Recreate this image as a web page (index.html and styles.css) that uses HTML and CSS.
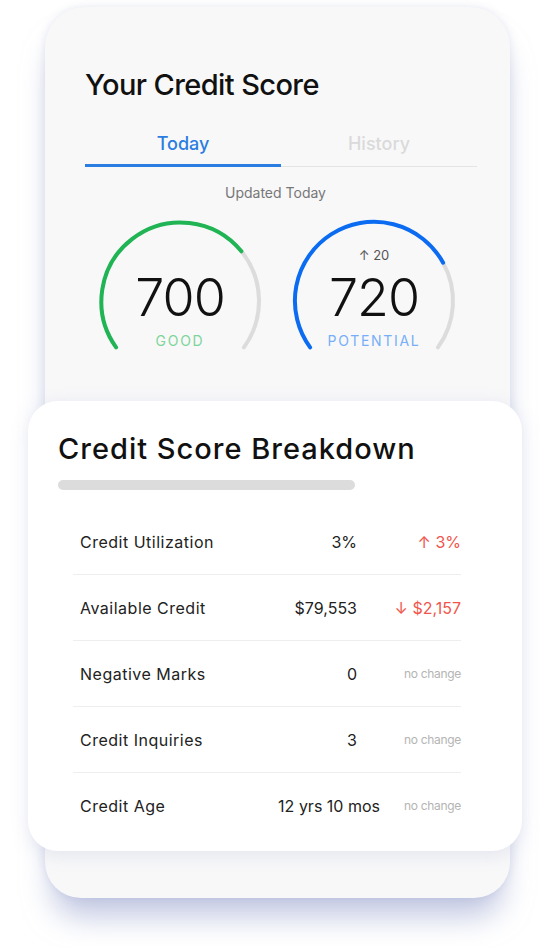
FILE: index.html
```html
<!DOCTYPE html>
<html>
<head>
  <title>Credit Score</title>
  <link rel="stylesheet" href="styles.css">
</head>
<body>
  <div class="phone">
    <h1 class="title">Your Credit Score</h1>

    <div class="tabs">
      <div class="tab active">Today</div>
      <div class="tab">History</div>
    </div>

    <p class="updated">Updated Today</p>

    <div class="gauges">
      <div class="gauge">
        <svg width="170" height="140" viewBox="0 0 170 140">
          <path d="M146.4 35.3 A79 79 0 0 1 148.9 131.4" class="track"/>
          <path d="M21.1 131.4 A79 79 0 0 1 146.4 35.3" class="arc green"/>
        </svg>
        <div class="gauge-text">
          <span class="score">700</span>
          <span class="label good">GOOD</span>
        </div>
      </div>
      <div class="gauge">
        <svg width="170" height="140" viewBox="0 0 170 140">
          <path d="M154.1 46.7 A79 79 0 0 1 148.9 131.4" class="track"/>
          <path d="M21.1 131.4 A79 79 0 1 1 154.1 46.7" class="arc blue"/>
        </svg>
        <div class="gauge-text">
          <span class="delta">&uarr; 20</span>
          <span class="score">720</span>
          <span class="label potential">POTENTIAL</span>
        </div>
      </div>
    </div>

    <div class="breakdown">
      <h2 class="title">Credit Score Breakdown</h2>
      <div class="bar"></div>

      <div class="rows">
        <div class="row">
          <span class="name">Credit Utilization</span>
          <span class="value">3%</span>
          <span class="change up">&uarr; 3%</span>
        </div>
        <div class="row">
          <span class="name">Available Credit</span>
          <span class="value">$79,553</span>
          <span class="change down">&darr; $2,157</span>
        </div>
        <div class="row">
          <span class="name">Negative Marks</span>
          <span class="value">0</span>
          <span class="change none">no change</span>
        </div>
        <div class="row">
          <span class="name">Credit Inquiries</span>
          <span class="value">3</span>
          <span class="change none">no change</span>
        </div>
        <div class="row wide">
          <span class="name">Credit Age</span>
          <span class="value">12 yrs 10 mos</span>
          <span class="change none">no change</span>
        </div>
      </div>
    </div>
  </div>
</body>
</html>
```

FILE: styles.css
```css
body {
  font-family: Inter, "Noto Sans", sans-serif;
  margin: 0;
  padding: 7px 0 50px 0;
  background-color: white;
  color: #111;
}
.phone {
  width: 465px;
  margin-left: 45px;
  padding: 60px 0 47px 0;
  box-sizing: border-box;
  background-color: #f8f8f9;
  border-radius: 40px 40px 36px 36px;
  box-shadow: 0 26px 30px -8px rgba(150, 160, 205, 0.6), 0 0 8px rgba(200, 205, 225, 0.45);
}
.title {
  font-size: 29px;
  font-weight: 500;
  letter-spacing: -0.6px;
  margin: 0;
  line-height: 36px;
}
.phone > .title {
  margin-left: 40px;
}
.tabs {
  display: flex;
  margin: 30px 33px 0 40px;
  border-bottom: 1px solid #e4e4e4;
}
.tab {
  flex: 1;
  text-align: center;
  font-size: 18px;
  font-weight: 500;
  color: #dadada;
  padding-bottom: 10px;
  margin-bottom: -1px;
}
.tab.active {
  color: #2a7de1;
  border-bottom: 3px solid #2a7de1;
}
.updated {
  text-align: center;
  font-size: 14px;
  color: #777;
  margin: 17px 0 0 0;
  padding-right: 4px;
}
.gauges {
  display: flex;
  gap: 24px;
  margin: 15px 0 0 50px;
}
.gauge {
  display: grid;
  width: 170px;
  height: 140px;
}
.gauge svg,
.gauge-text {
  grid-area: 1 / 1;
}
.track,
.arc {
  fill: none;
  stroke-width: 4;
  stroke-linecap: round;
}
.track {
  stroke: #dcdcdc;
}
.arc.green {
  stroke: #20b454;
}
.arc.blue {
  stroke: #0b6cf2;
}
.gauge-text {
  display: grid;
  grid-template-rows: 20px 44px 16px;
  row-gap: 11px;
  justify-items: center;
  align-content: start;
  padding-top: 29px;
}
.delta {
  grid-row: 1;
  font-size: 13px;
  line-height: 20px;
  color: #555;
}
.score {
  grid-row: 2;
  font-size: 52px;
  font-weight: 300;
  line-height: 44px;
  letter-spacing: -1px;
}
.label {
  grid-row: 3;
  font-size: 14px;
  letter-spacing: 1.7px;
  line-height: 16px;
  margin-top: 2px;
}
.good {
  color: #7dd59a;
}
.potential {
  color: #76aef7;
}
.breakdown {
  margin: 45px -12px 0 -17px;
  padding: 30px 61px 13px 30px;
  background-color: white;
  border-radius: 30px;
  box-shadow: 0 4px 18px rgba(180, 186, 215, 0.3);
}
.breakdown .title {
  letter-spacing: 1px;
}
.bar {
  width: 297px;
  height: 10px;
  border-radius: 5px;
  background-color: #dcdcdc;
  margin-top: 13px;
}
.rows {
  margin: 19px 0 0 15px;
}
.row {
  display: flex;
  align-items: center;
  height: 65px;
  padding-left: 7px;
  border-bottom: 1px solid #eeeeee;
  font-size: 16px;
  color: #222;
}
.row:last-child {
  border-bottom: none;
}
.name {
  flex: 1;
  letter-spacing: 0.5px;
}
.value {
  text-align: right;
}
.change {
  width: 104px;
  text-align: right;
  font-size: 16px;
}
.row.wide .change {
  width: 81px;
}
.up,
.down {
  color: #f0564d;
}
.none {
  font-size: 12px;
  color: #b4b4b4;
  letter-spacing: -0.3px;
}
```
